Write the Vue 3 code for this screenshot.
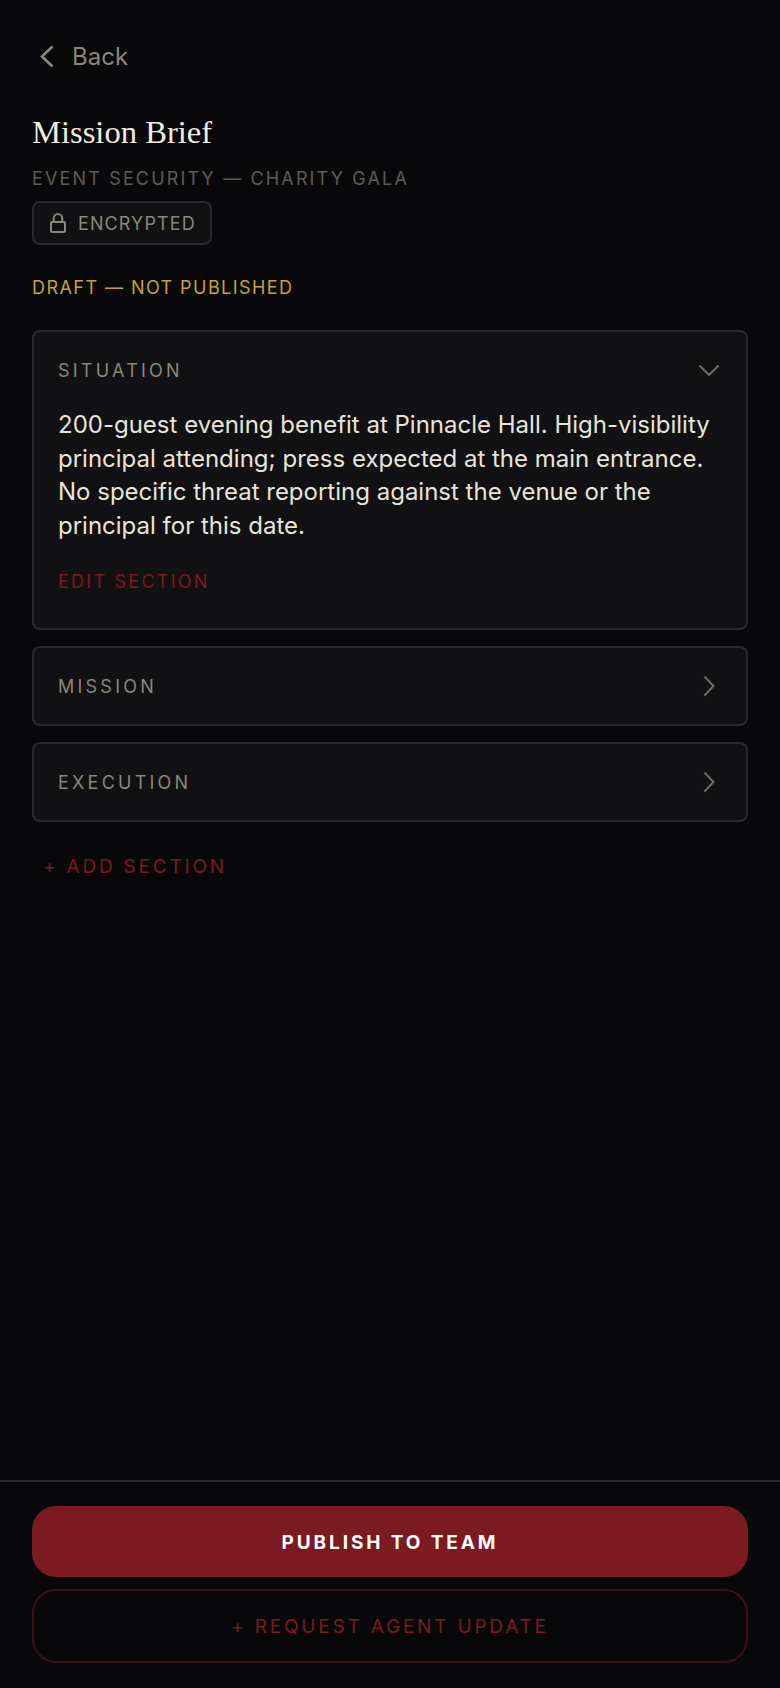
<script setup>
const collapsed = ['MISSION', 'EXECUTION']
</script>

<template>
  <div class="page">
    <main class="content">
      <button class="back">
        <svg class="back-icon" viewBox="0 0 14 24" fill="none"><path d="M12.5 2.5 2 12.5l10.5 10"/></svg>
        <span>Back</span>
      </button>
      <h1 class="title">Mission Brief</h1>
      <p class="sub">EVENT SECURITY — CHARITY GALA</p>
      <div class="badge">
        <svg class="lock" viewBox="0 0 16 20" fill="none">
          <rect x="1" y="9" width="14" height="10" rx="1"/>
          <path d="M3.8 9V5.2a4.2 4.2 0 0 1 8.4 0V9"/>
        </svg>
        <span>ENCRYPTED</span>
      </div>
      <p class="draft">DRAFT — NOT PUBLISHED</p>

      <section class="card first">
        <div class="card-head">
          <span class="label">SITUATION</span>
          <svg class="chev-down" viewBox="0 0 22 12" fill="none"><path d="m1.5 1.5 9.5 9.5 9.5-9.5"/></svg>
        </div>
        <p class="body">200-guest evening benefit at Pinnacle Hall. High-visibility principal attending; press expected at the main entrance. No specific threat reporting against the venue or the principal for this date.</p>
        <a class="edit">EDIT SECTION</a>
      </section>

      <section v-for="name in collapsed" :key="name" class="card">
        <div class="card-head">
          <span class="label">{{ name }}</span>
          <svg class="chev-right" viewBox="0 0 12 22" fill="none"><path d="m1.5 1.5 9 9.5-9 9.5"/></svg>
        </div>
      </section>

      <a class="add">+ ADD SECTION</a>
    </main>

    <footer class="footer">
      <button class="primary">PUBLISH TO TEAM</button>
      <button class="secondary">+ REQUEST AGENT UPDATE</button>
    </footer>
  </div>
</template>

<style>
html, body { margin: 0; background: #08080a; }
</style>

<style scoped>
.page {
  height: 1688px;
  display: flex;
  flex-direction: column;
  background: #08080a;
  font-family: Inter, "Liberation Sans", sans-serif;
  box-sizing: border-box;
}
.content {
  flex: 1;
  padding: 38px 32px 0;
  display: flex;
  flex-direction: column;
  align-items: stretch;
}
.back {
  height: 36px;
  display: flex;
  align-items: center;
  gap: 18px;
  padding: 0 0 0 8px;
  background: none;
  border: 0;
  color: #8a867a;
  font: inherit;
  font-size: 24px;
}
.back-icon {
  width: 14px;
  height: 24px;
  stroke: #8a867a;
  stroke-width: 2.7;
}
.title {
  margin: 38px 0 0;
  font: 400 32.6px/40px "Liberation Serif", serif;
  color: #f0ece2;
}
.sub {
  margin: 15px 0 0;
  font-size: 18px;
  line-height: 24px;
  letter-spacing: 2.15px;
  color: #5f5c55;
}
.badge {
  margin-top: 10px;
  align-self: flex-start;
  box-sizing: border-box;
  height: 44px;
  padding: 0 14px 0 16px;
  display: flex;
  align-items: center;
  gap: 12px;
  background: #111113;
  border: 2px solid #2a2a2e;
  border-radius: 8px;
  color: #8a867a;
  font-size: 18px;
  letter-spacing: 1.1px;
}
.lock {
  width: 16px;
  height: 20px;
  stroke: #8a867a;
  stroke-width: 2;
}
.draft {
  margin: 31px 0 0;
  font-size: 18px;
  line-height: 24px;
  letter-spacing: 1.44px;
  color: #c9a227;
}
.card {
  margin-bottom: 16px;
  box-sizing: border-box;
  background: #111113;
  border: 2px solid #2a2a2e;
  border-radius: 8px;
}
.first {
  margin-top: 30px;
  height: 300px;
}
.card-head {
  height: 76px;
  padding: 0 24px;
  display: flex;
  align-items: center;
  justify-content: space-between;
}
.label {
  font-size: 18px;
  letter-spacing: 0.18em;
  color: #8a867a;
}
.chev-down {
  width: 22px;
  height: 12px;
  margin-right: 2px;
  stroke: #6f6b61;
  stroke-width: 2;
}
.chev-right {
  width: 12px;
  height: 22px;
  margin-right: 7px;
  stroke: #6f6b61;
  stroke-width: 2;
}
.body {
  margin: 0;
  padding: 0 24px;
  font-size: 24px;
  line-height: 33.6px;
  color: #e8e4da;
}
.edit {
  display: block;
  margin-top: 28px;
  padding: 0 24px;
  font-size: 18px;
  line-height: 24px;
  letter-spacing: 2.25px;
  color: #7b1a20;
}
.add {
  margin-top: 17px;
  padding-left: 11px;
  font-size: 19px;
  line-height: 24px;
  letter-spacing: 2.8px;
  color: #7b1a20;
}
.footer {
  box-sizing: border-box;
  height: 208px;
  padding: 24px 32px 0;
  border-top: 2px solid #2a2a2e;
  display: flex;
  flex-direction: column;
  gap: 12px;
}
.primary, .secondary {
  font-family: inherit;
  font-size: 19px;
  border-radius: 24px;
  box-sizing: border-box;
  padding-top: 2px;
}
.primary {
  height: 71px;
  background: #7b1a20;
  border: 0;
  color: #fff;
  font-weight: 700;
  letter-spacing: 2.9px;
}
.secondary {
  height: 74px;
  background: transparent;
  border: 2px solid #3a1216;
  color: #7b1a20;
  font-weight: 400;
  letter-spacing: 2.8px;
}
</style>
